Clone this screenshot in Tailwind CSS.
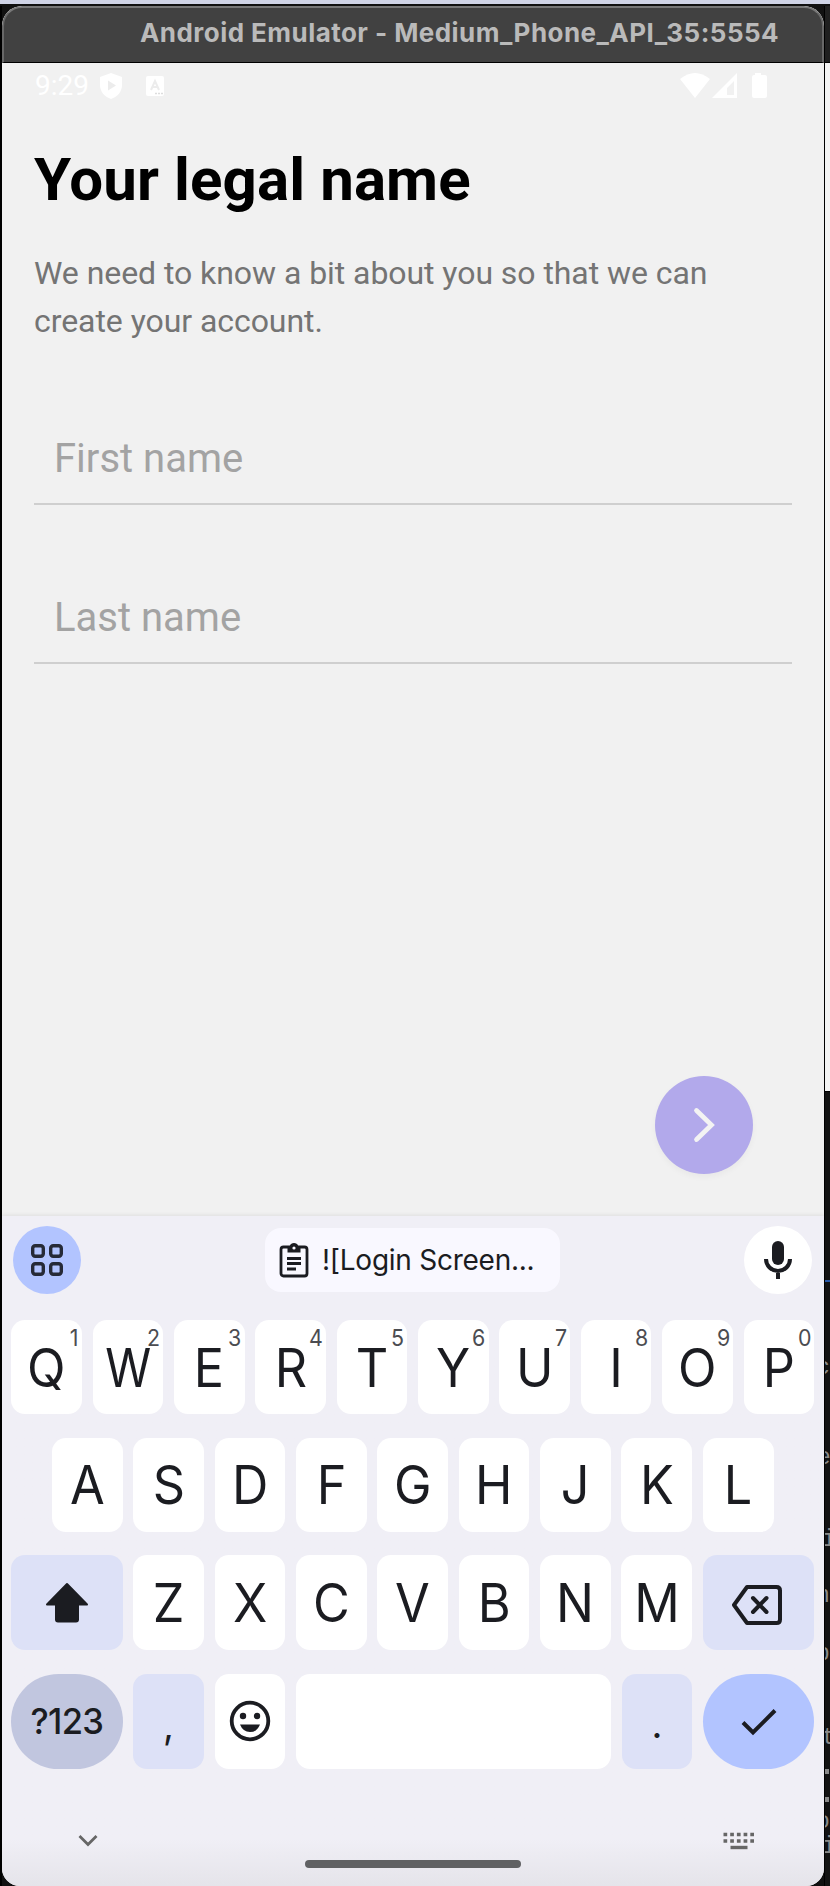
<!DOCTYPE html>
<html lang="en">
<head>
<meta charset="utf-8">
<title>Android Emulator</title>
<script src="https://cdn.jsdelivr.net/npm/@tailwindcss/browser@4"></script>
</head>
<body class="w-[830px] h-[1886px] overflow-hidden bg-black font-['Inter',sans-serif]">
<div class="relative w-[830px] h-[1886px] overflow-hidden flex flex-col">
  <div class="h-1 shrink-0 bg-[#d0d4e6]"></div>
  <div class="flex flex-1 min-h-0 pt-[2px] bg-[#111]">
    <div class="w-[2px] shrink-0 bg-black"></div>
    <main class="w-[822px] shrink-0 flex flex-col rounded-t-[20px] rounded-b-[18px] overflow-hidden bg-[#f1f1f1]">
      <header class="h-[57px] shrink-0 rounded-t-[20px] bg-[#414141] border-t-2 border-x-2 border-b border-t-[#777] border-x-[#686868] border-b-black flex items-center pl-[136px] pb-[5px]">
        <h1 class="text-[26px] leading-8 font-bold text-[#bababa] whitespace-nowrap tracking-[0.45px]">Android Emulator - Medium_Phone_API_35:5554</h1>
      </header>

      <div class="h-[46px] shrink-0 flex items-center pl-[33px] pr-[56px] text-white">
        <span class="font-['Roboto',sans-serif] text-[28px] leading-none w-[64px] whitespace-nowrap">9:29</span>
        <svg class="w-[24px] h-[28px]" viewBox="0 0 24 28"><path fill="#fff" d="M12 1 23 5v8c0 7-5 12-11 14C6 25 1 20 1 13V5z"/><path fill="#ececec" d="M9 8.500v10l8-5z"/></svg>
        <svg class="ml-[22px] w-[20px] h-[22px]" viewBox="0 0 20 22"><rect x="1" y="1" width="18" height="20" rx="2" fill="#fff"/><path d="M6 15 10 6l4 9M7.500 12h5" fill="none" stroke="#ececec" stroke-width="2"/><path d="M10 18.500h8" stroke="#ddd" stroke-width="1.500" stroke-dasharray="2 1"/></svg>
        <svg class="ml-auto w-[88px] h-[28px]" viewBox="0 0 88 28" fill="#fff"><path d="M0 7Q15-5 30 7L15 26z"/><path fill-rule="evenodd" d="M57 1v25H32zM54 9l-7 7v7h7z"/><path d="M75 1h6v2h4q2 0 2 2v19q0 2-2 2H74q-2 0-2-2V5q0-2 2-2h1z"/></svg>
      </div>

      <section class="flex-1 flex flex-col px-[32px] font-['Roboto',sans-serif]">
        <h2 class="mt-[36px] text-[60px] leading-[70px] font-bold text-black whitespace-nowrap tracking-[0.1px]">Your legal name</h2>
        <p class="mt-[34px] text-[32px] leading-[48px] text-[#747474] tracking-[-0.06px]">We need to know a bit about you so that we can<br>create your account.</p>
        <div class="mt-[64px] h-[96px] w-[758px] border-b-2 border-[#cfcfcf] flex items-center pt-[5px] pl-[20px] text-[40px] text-[#a3a3a3]">First name</div>
        <div class="mt-[63px] h-[96px] w-[758px] border-b-2 border-[#cfcfcf] flex items-center pt-[5px] pl-[20px] text-[40px] text-[#a3a3a3]">Last name</div>
        <button class="mt-auto mb-[42px] mr-[39px] self-end w-[98px] h-[98px] rounded-full bg-[#b2a9eb] shadow-[0_3px_6px_rgba(0,0,0,0.04)] flex items-center justify-center">
          <svg class="w-[98px] h-[98px]" viewBox="0 0 98 98" fill="none" stroke="#f3f3f3" stroke-width="4.700" stroke-linecap="round"><path d="M41.500 34.500 56.500 49 41.500 63.500"/></svg>
        </button>
      </section>

      <section class="h-[670px] shrink-0 bg-linear-to-b from-[#f0eff6] from-93% to-[#e5e4ea] shadow-[0_-1px_4px_rgba(0,0,0,0.08)] pl-[9px] pr-[9px] flex flex-col text-[#1b1c21]">
        <div class="mt-[10px] h-[68px] shrink-0 flex items-center justify-between pl-[2px] pr-[3px]">
          <div class="w-[68px] h-[68px] rounded-full bg-[#b2c4ff] flex items-center justify-center">
            <svg class="w-[34px] h-[34px]" viewBox="0 0 34 34" fill="none" stroke="#262a37" stroke-width="3.400"><rect x="2.700" y="2.700" width="10.600" height="10.600" rx="2.500"/><rect x="20.700" y="2.700" width="10.600" height="10.600" rx="2.500"/><rect x="2.700" y="20.700" width="10.600" height="10.600" rx="2.500"/><rect x="20.700" y="20.700" width="10.600" height="10.600" rx="2.500"/></svg>
          </div>
          <div class="w-[295px] h-[64px] rounded-[16px] bg-[#f9f8ff] flex items-center pl-[14px]">
            <svg class="w-[30px] h-[36px]" viewBox="0 0 30 36" fill="none" stroke="#1b1c21" stroke-width="2.800"><rect x="2" y="5" width="26" height="29" rx="2.500"/><path d="M8 16.500h14M8 21.500h14M8 27h9"/><path fill="#1b1c21" stroke="none" d="M8.500 4h2.300a4.500 4.500 0 0 1 8.400 0h2.300v6.500h-13z"/><circle cx="15" cy="6" r="1.600" fill="#f9f8ff" stroke="none"/></svg>
            <span class="ml-[13px] text-[28px] leading-none tracking-[-0.25px] whitespace-nowrap">![Login Screen...</span>
          </div>
          <div class="w-[68px] h-[68px] rounded-full bg-white flex items-center justify-center">
            <svg class="w-[30px] h-[40px]" viewBox="0 0 30 40"><rect x="9" y="1" width="12" height="24" rx="6" fill="#1b1c21"/><path d="M3 19a12 12 0 0 0 24 0M15 31v8" fill="none" stroke="#1b1c21" stroke-width="4"/></svg>
          </div>
        </div>
        <div id="keys" class="mt-[26px] w-[803.400px] shrink-0 flex flex-col gap-[23.700px] text-[53px] leading-none"></div>
        <div class="mt-[54px] flex items-start h-[70px] shrink-0">
          <svg class="ml-[67px] mt-[11px] w-[20px] h-[14px]" viewBox="0 0 20 14"><path d="M1.500 2 10 10.500 18.500 2" fill="none" stroke="#666" stroke-width="2.800"/></svg>
          <div class="ml-[207px] mt-[37px] w-[216px] h-[8px] rounded-full bg-[#606163]"></div>
          <svg class="ml-[202px] mt-[9px] w-[32px] h-[18px]" viewBox="0 0 32 18" fill="none" stroke="#666"><path d="M.5 2.500h32M.5 9h32" stroke-width="3.600" stroke-dasharray="3.700 3"/><path d="M7.500 15.500h17" stroke-width="3.400"/></svg>
        </div>
      </section>
    </main>
    <div class="w-px shrink-0 bg-black"></div>
    <aside class="flex-1 flex flex-col overflow-hidden">
      <div class="h-[57px] shrink-0 bg-[#202020] border-b border-black"></div>
      <div class="h-[1028px] shrink-0 bg-[#f4f4f4]"></div>
      <div class="relative flex-1 overflow-hidden bg-[#131313] border-t border-black font-['Liberation_Mono',monospace] text-[23px] leading-[24px] text-[#8a8a8a]">
        <!-- edge of the editor window behind the emulator -->
        <div class="absolute left-0 top-[188px] w-full h-[2px] bg-[#2a5aa8]"></div>
        <span class="absolute -left-[9px] top-[264px]">c</span>
        <span class="absolute -left-[8px] top-[354px]">e</span>
        <span class="absolute -left-[3px] top-[436px]">i</span>
        <span class="absolute -left-[9px] top-[492px]">n</span>
        <span class="absolute -left-[9px] top-[550px]">p</span>
        <span class="absolute -left-[3px] top-[634px]">t</span>
        <div class="absolute left-0 top-[677px] w-1 h-[5px] bg-[#8a8a8a]"></div>
        <div class="absolute left-0 top-[705px] w-1 h-[5px] bg-[#8a8a8a]"></div>
        <span class="absolute -left-[9px] top-[718px]">o</span>
        <span class="absolute -left-[3px] top-[743px]">i</span>
      </div>
    </aside>
  </div>
</div>
<script>
{
  const fills = {
    white: 'bg-white rounded-[14px]',
    tint: 'bg-[#dde1f7] rounded-[14px]',
    mode: 'bg-[#c1c6df] rounded-full',
    enter: 'bg-[#b2c4ff] rounded-full'
  };
  const shift = '<svg class="w-[44px] h-[42px]" viewBox="0 0 44 42"><path d="M22 2 42 22.500H33V37.500q0 2-2 2H13q-2 0-2-2V22.500H2z" fill="#1b1c21" stroke="#1b1c21" stroke-linejoin="round" stroke-width="2"/></svg>';
  const del = '<svg class="w-[52px] h-[42px] mr-[2px] mt-[5px]" viewBox="0 0 52 42" fill="none" stroke="#1b1c21" stroke-width="4" stroke-linejoin="round"><path d="M16 3H45.500q3.500 0 3.500 3.500V35.500q0 3.500-3.500 3.500H16L3 21z"/><path d="M22 14 35.500 28M35.500 14 22 28" stroke-linecap="round"/></svg>';
  const smile = '<svg class="w-[42px] h-[42px]" viewBox="0 0 42 42"><circle cx="21" cy="21" r="18.300" fill="none" stroke="#1b1c21" stroke-width="3.800"/><circle cx="14" cy="16" r="3.200" fill="#1b1c21"/><circle cx="28" cy="16" r="3.200" fill="#1b1c21"/><path d="M11 24.500h20q-3 7.500-10 7.500t-10-7.500z" fill="#1b1c21"/></svg>';
  const check = '<svg class="w-[36px] h-[28px] mt-[2px]" viewBox="0 0 36 28"><path d="M2 14.500 12 24.500 34 2.500" fill="none" stroke="#1b1c21" stroke-width="4"/></svg>';
  const letter = c => `<span class="inline-block mt-[2px] ${c === 'W' ? 'scale-x-[.88]' : 'scale-x-[.95]'}">${c}</span>`;
  const key = (w, fill, body) => `<div class="relative h-full flex items-center justify-center ${fills[fill]}" style="width:${w}px">${body}</div>`;
  const row = (h, keys) => `<div class="flex justify-center gap-[10.700px]" style="height:${h}px">${keys.join('')}</div>`;
  const K = 70.7;
  const letters = s => [...s].map(c => key(K, 'white', letter(c)));
  const numbered = [...'QWERTYUIOP'].map((c, i) => key(K, 'white', letter(c) + `<span class="absolute right-[3px] top-[7px] text-[23px] leading-[22px] text-[#4b4c51] origin-right scale-x-[.93]">${(i + 1) % 10}</span>`));
  document.getElementById('keys').innerHTML =
    row(94, numbered) +
    row(94, letters('ASDFGHJKL')) +
    row(94.5, [key(111.3, 'tint', shift), ...letters('ZXCVBNM'), key(111.3, 'tint', del)]) +
    row(95.5, [
      key(111.3, 'mode', '<span class="text-[36px] font-medium tracking-[-0.7px] scale-x-[.96]">?123</span>'),
      key(K, 'tint', '<span class="text-[38px] pt-[8px]">,</span>'),
      key(K, 'white', smile),
      key(314.9, 'white', ''),
      key(K, 'tint', '<span class="text-[38px] pt-[6px]">.</span>'),
      key(111.3, 'enter', check)
    ]);
}
</script>
</body>
</html>
